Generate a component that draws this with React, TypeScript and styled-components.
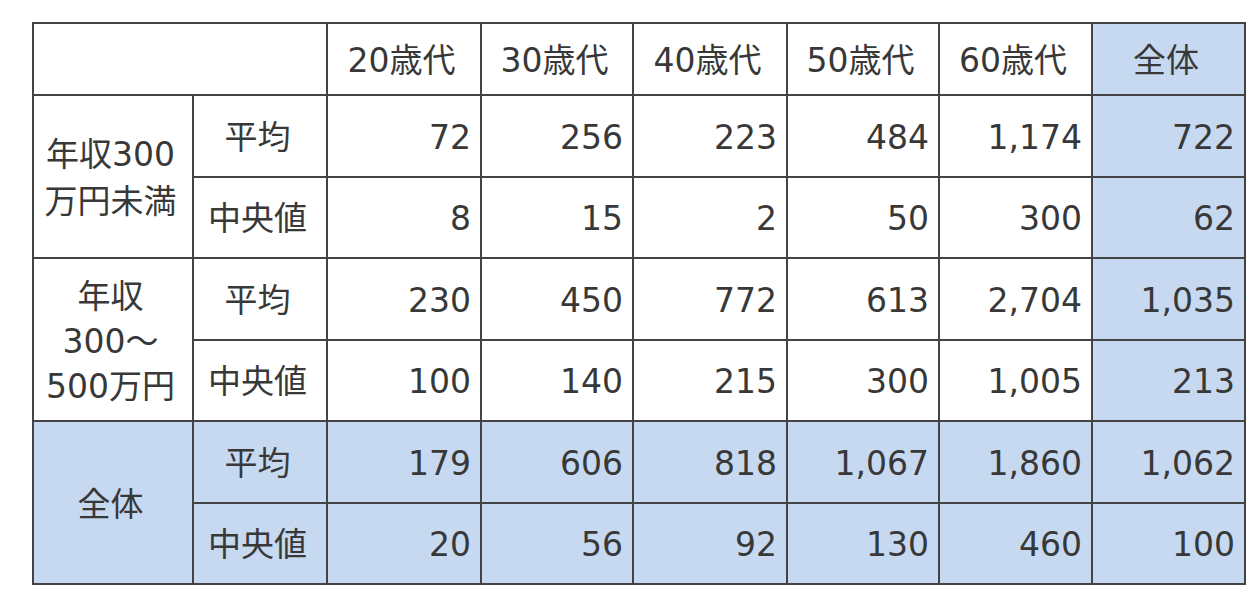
import styled, { createGlobalStyle } from "styled-components";

const GlobalStyle = createGlobalStyle`
  html, body { margin:0; padding:0; background:#fff; }
  body { font-family:"DejaVu Sans", "Noto Sans CJK JP", sans-serif; color:#333; }
`;

const Page = styled.div`
  padding:22px 0 0 32px;
`;

const Table = styled.table`
  border-collapse:collapse;
  table-layout:fixed;
  border:2px solid #444;
`;

const Cell = styled.td<{ $blue?: boolean; $num?: boolean; $h?: number }>`
  border:2px solid #444;
  padding:3px 9px 0 4px;
  height:${p => p.$h ?? 78}px;
  box-sizing:border-box;
  background:${p => (p.$blue ? "#c6d9f0" : "#fff")};
  text-align:${p => (p.$num ? "right" : "center")};
  font-size:33px;
  line-height:46px;
  color:#383838;
  white-space:nowrap;
`;

const cols = [160, 134, 154, 152, 154, 152, 153, 153];
const ages = ["20歳代", "30歳代", "40歳代", "50歳代", "60歳代"];

type Group = { label: string[]; blue: boolean; rows: { name: string; vals: string[] }[] };

const groups: Group[] = [
  {
    label: ["年収300", "万円未満"],
    blue: false,
    rows: [
      { name: "平均", vals: ["72", "256", "223", "484", "1,174", "722"] },
      { name: "中央値", vals: ["8", "15", "2", "50", "300", "62"] },
    ],
  },
  {
    label: ["年収", "300～", "500万円"],
    blue: false,
    rows: [
      { name: "平均", vals: ["230", "450", "772", "613", "2,704", "1,035"] },
      { name: "中央値", vals: ["100", "140", "215", "300", "1,005", "213"] },
    ],
  },
  {
    label: ["全体"],
    blue: true,
    rows: [
      { name: "平均", vals: ["179", "606", "818", "1,067", "1,860", "1,062"] },
      { name: "中央値", vals: ["20", "56", "92", "130", "460", "100"] },
    ],
  },
];

const GroupLabel = styled.div<{ $lines: number }>`
  line-height:${p => (p.$lines > 2 ? 45 : 47)}px;
`;

export default function App() {
  return (
    <Page>
      <GlobalStyle />
      <Table>
        <colgroup>
          {cols.map((w, i) => <col key={i} style={{ width: w }} />)}
        </colgroup>
        <tbody>
          <tr>
            <Cell colSpan={2} $h={72}></Cell>
            {ages.map(a => <Cell key={a} $h={72}>{a}</Cell>)}
            <Cell $blue $h={72}>全体</Cell>
          </tr>
          {groups.map(g =>
            g.rows.map((r, ri) => (
              <tr key={g.label.join() + r.name}>
                {ri === 0 && (
                  <Cell rowSpan={2} $blue={g.blue}>
                    <GroupLabel $lines={g.label.length}>
                      {g.label.map(l => <div key={l}>{l}</div>)}
                    </GroupLabel>
                  </Cell>
                )}
                <Cell $blue={g.blue} $h={ri === 0 ? 82 : 81}>{r.name}</Cell>
                {r.vals.map((v, vi) => (
                  <Cell key={vi} $num $blue={g.blue || vi === 5} $h={ri === 0 ? 82 : 81}>{v}</Cell>
                ))}
              </tr>
            ))
          )}
        </tbody>
      </Table>
    </Page>
  );
}
